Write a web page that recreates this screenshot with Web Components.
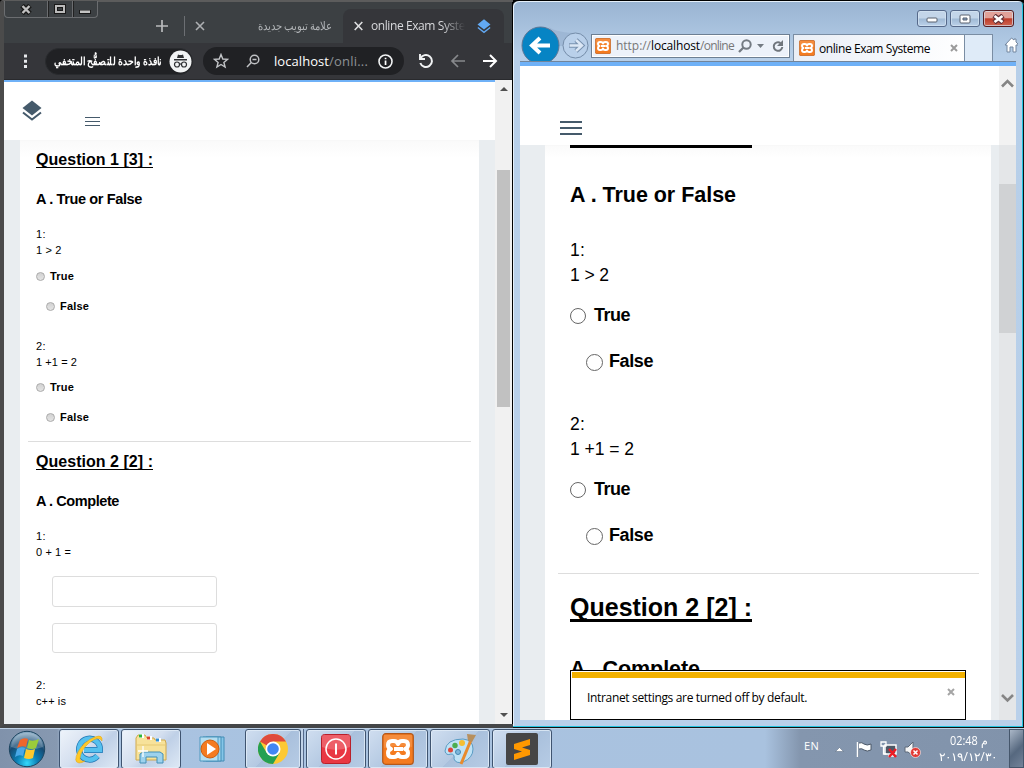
<!DOCTYPE html>
<html lang="en"><head><meta charset="utf-8"><title>Desktop</title>
<style>html,body{margin:0;width:1024px;height:768px;overflow:hidden;background:#000}</style></head>
<body><desktop-screen></desktop-screen>
<script>
const define=(name,html)=>{
  const t=document.createElement('template');
  t.innerHTML='<style>*{box-sizing:border-box}svg{display:block;flex:none}</style>'+html;
  customElements.define(name,class extends HTMLElement{
    constructor(){super();this.attachShadow({mode:'open'}).append(t.content.cloneNode(true));}
  });
};
const XAMPP='<svg width="100%" height="100%" viewBox="0 0 32 32"><rect x=".7" y=".7" width="30.6" height="30.6" rx="3" fill="#f47b20" stroke="#b4581a" stroke-width="1.2"/><path d="M2 2h28v12Q16 11 2 15z" fill="#fff" opacity=".13"/><path d="M10 8h2q3 0 4 3 1-3 4-3h2q4 0 4 4 0 3-3 4 3 1 3 4 0 4-4 4h-2q-3 0-4-3-1 3-4 3h-2q-4 0-4-4 0-3 3-4-3-1-3-4 0-4 4-4zM12 16h9" fill="none" stroke="#fff" stroke-width="4" stroke-linejoin="round"/></svg>';

/* Text run of a given width: letter spacing for Latin, horizontal scale for joined scripts */
customElements.define('fit-text',class extends HTMLElement{
  constructor(){super();this.attachShadow({mode:'open'}).innerHTML='<style>:host{display:inline-block;white-space:pre}:host([dir=rtl]){direction:ltr}:host([dir=rtl]) span{direction:rtl}span{display:inline-block;white-space:pre;transform-origin:0 50%}</style><span><slot></slot></span>';}
  connectedCallback(){
    const s=this.shadowRoot.querySelector('span'),w=+this.getAttribute('w');
    const n=this.textContent.length,m=s.getBoundingClientRect().width;
    if(!w||!m)return;
    this.style.width=w+'px';
    if(this.hasAttribute('scale'))s.style.transform='scaleX('+w/m+')';
    else s.style.letterSpacing=(w-m)/n+'px';
  }
});

define('layers-icon',`<style>:host{display:block}</style><svg width="100%" height="100%" viewBox="0 0 20 22"><path d="M10 .5 19.500 8 10 15.500.5 8z" fill="currentColor"/><path d="M1 12.500 10 19.500 19 12.500" fill="none" stroke="currentColor" stroke-width="2"/></svg>`);

define('menu-lines',`<style>:host{display:flex;flex-direction:column;justify-content:space-between;width:var(--w);height:var(--h)}i{height:var(--t);background:#455a6b}</style><i></i><i></i><i></i>`);

define('exam-line',`<style>:host{display:flex;align-items:center;flex:none;height:var(--h,16px);margin-top:var(--m,0px);padding-left:var(--p,16px);white-space:pre}</style><slot></slot>`);

define('exam-choice',`<style>:host{display:flex;align-items:center;flex:none;height:var(--h,16px);margin-top:var(--m,0px);padding-left:var(--p,16px);font-weight:bold}
i{width:var(--r,9px);height:var(--r,9px);border:1px solid var(--rb,#aaa);border-radius:50%;background:var(--rf,linear-gradient(#d2d2d2,#e4e4e4));margin-right:var(--g,5px);position:relative;top:var(--dy,0)}</style><i></i><slot></slot>`);

define('tab-strip',`<style>:host{display:flex;height:41px;align-items:flex-start;font:12px/16px "Open Sans","Noto Sans",sans-serif;color:#b0b3b6}
.wb{display:flex;width:94px;height:17px;margin:-1px 0 0 0;border:1px solid #6b6d70;border-top:0;border-radius:0 0 4px 4px;outline:0;background:#3c4043}
.wb span{flex:1;display:grid;place-items:center;border-left:1px solid #6b6d70;box-shadow:inset 1px 0 #222}.wb span:first-child{flex:0 0 42px;border:0;box-shadow:none}
.plus{margin:17px 0 0 57px}.sep{width:1px;height:20px;background:#6c6f73;margin:14px 0 0 15px}.x1{margin:19px 0 0 10px}
.ar{margin:16px 0 0 53px;width:74px}
.tab{margin:7px 0 0 11px;width:161px;height:34px;border-radius:8px 8px 0 0;background:#35363a;display:flex;align-items:center;color:#d8d9dc}
.tab fit-text{margin-left:8px;-webkit-mask:linear-gradient(90deg,#000 75%,transparent);mask:linear-gradient(90deg,#000 75%,transparent)}
layers-icon{width:14px;height:15px;color:#62a9f4;margin-left:12px}</style>
<div class="wb"><span><svg width="12" height="11" viewBox="0 0 12 11"><path d="M2 1.500 10 9.500M10 1.500 2 9.500" stroke="#1a1a1a" stroke-width="5"/><path d="M2.500 2 9.500 9M9.500 2 2.500 9" stroke="#c0c0c0" stroke-width="2.400"/></svg></span><span><svg width="12" height="10"><rect x="2" y="2" width="8" height="6" fill="none" stroke="#1a1a1a" stroke-width="4"/><rect x="2" y="2" width="8" height="6" fill="none" stroke="#bbb" stroke-width="2"/></svg></span><span><svg width="12" height="10"><path d="M0 6h12v4H0z" fill="#1a1a1a"/><path d="M1 6.500h10v2.500H1z" fill="#c4c4c4"/></svg></span></div>
<svg class="plus" width="14" height="14"><path d="M7 1v12M1 7h12" stroke="#b9bbbd" stroke-width="1.700"/></svg><i class="sep"></i>
<svg class="x1" width="10" height="10"><path d="M1 1l8 8M9 1 1 9" stroke="#aeb0b3" stroke-width="1.600"/></svg>
<div class="ar"><fit-text w="74" scale dir="rtl">علامة تبويب جديدة</fit-text></div>
<div class="tab"><svg style="margin-left:11px" width="9" height="10"><path d="M.7 1l7.600 8M8.300 1 .7 9" stroke="#dedfe1" stroke-width="1.600"/></svg><fit-text w="94">online Exam Syste</fit-text><layers-icon></layers-icon></div>`);

define('chrome-toolbar',`<style>:host{display:flex;align-items:center;height:37px;background:#35363a;border-bottom:1px solid #292a2d;font:13px/18px "Open Sans","Noto Sans",sans-serif;color:#8d9195}
.pill{display:flex;align-items:center;width:148px;height:27px;margin-left:17px;padding-left:8px;border-radius:14px;background:#202124;border:1px solid #292b2e;color:#fff;font-weight:bold;font-size:11px}
.omni{display:flex;align-items:center;width:201px;height:28px;border-radius:14px;background:#202124;margin-left:10px;padding-left:10px}</style>
<svg width="6" height="16" style="margin-left:18px"><path d="M2 1.500h3v3H2zM2 6.700h3v3H2zM2 12h3v3H2z" fill="#e8eaed"/></svg>
<div class="pill"><fit-text w="108" scale dir="rtl">نافذة واحدة للتصفُّح المتخفي</fit-text><svg style="margin-left:7px" width="23" height="23" viewBox="0 0 23 23"><circle cx="11.500" cy="11.500" r="11" fill="#f1f3f4"/><path d="M8 8 9 4.500Q11.500 5.500 14 4.500L15 8zM5 9h13v1.500H5z" fill="#2e3033"/><g fill="none" stroke="#2e3033" stroke-width="1.200"><circle cx="8" cy="14.500" r="2.500"/><circle cx="15" cy="14.500" r="2.500"/><path d="M10.500 14h2"/></g></svg></div>
<div class="omni"><svg width="16" height="16" viewBox="0 0 16 16"><path d="M8 1.500 9.800 6 14.600 6.300 10.900 9.400 12.100 14 8 11.500 3.900 14 5.100 9.400 1.400 6.300 6.200 6z" fill="none" stroke="#c2c4c7" stroke-width="1.400"/></svg>
<svg style="margin-left:17px" width="14" height="14" viewBox="0 0 14 14"><circle cx="8.500" cy="5.500" r="4.300" fill="none" stroke="#bfc1c4" stroke-width="1.500"/><path d="M5.300 8.500 1 13M6.500 5.500h4" stroke="#bfc1c4" stroke-width="1.500"/></svg>
<fit-text w="55" style="color:#fff;margin-left:14px">localhost</fit-text><fit-text w="39">/onli...</fit-text>
<svg style="margin-left:10px" width="15" height="15"><circle cx="7.500" cy="7.500" r="6.500" fill="none" stroke="#f1f3f4" stroke-width="1.600"/><path d="M6.700 6.500h1.700V11H6.700zM6.700 3.700h1.700v1.600H6.700z" fill="#fff"/></svg></div>
<svg style="margin-left:14px" width="16" height="16"><path d="M2 1v5h5" fill="none" stroke="#f1f3f4" stroke-width="1.900"/><path d="M2.500 5.500A6 6 0 1 1 2.300 10" fill="none" stroke="#f1f3f4" stroke-width="2"/></svg>
<svg style="margin-left:16px" width="16" height="16"><path d="M15 8H2M8 2 2 8l6 6" fill="none" stroke="#87898c" stroke-width="1.700"/></svg>
<svg style="margin-left:16px" width="16" height="16"><path d="M1 8h13M8 2l6 6-6 6" fill="none" stroke="#fff" stroke-width="2"/></svg>`);

define('chrome-page',`<style>:host{display:flex;flex-direction:column;height:644px;width:491px;border-top:2px solid #6fb1f7;background:#e9edf0;font:11px/16px "Liberation Sans",Arial,sans-serif;color:#000;overflow:hidden}
header{height:58px;flex:none;background:#fff;display:flex}header layers-icon{width:20px;height:22px;color:#455a6b;margin:18px 0 0 18px}header menu-lines{--w:15px;--h:9px;--t:1px;margin:35px 0 0 43px}
main{flex:1;margin:0 16px;background:linear-gradient(#f6f6f6,#fafafa 1px,#fff 18px);display:flex;flex-direction:column}
h3,h4{margin:0;font-size:16px}h4{font-size:14.500px}
.u{border-bottom:1px solid #000;line-height:20px;height:18px;margin-bottom:2px}hr{flex:none;border:0;margin:16px 8px 0;height:1px;background:#ddd}
.in{flex:none;width:165px;height:31px;margin:16px 0 0 32px;border:1px solid #ddd;border-radius:3px}</style>
<header><layers-icon></layers-icon><menu-lines></menu-lines></header><main>
<exam-line style="--m:10px;--h:20px"><h3 class="u"><fit-text w="117">Question 1 [3] :</fit-text></h3></exam-line>
<exam-line style="--m:20px;--h:18px"><h4><fit-text w="106">A . True or False</fit-text></h4></exam-line>
<exam-line style="--m:18px"><fit-text w="10">1:</fit-text></exam-line><exam-line><fit-text w="25.500">1 &gt; 2</fit-text></exam-line>
<exam-choice style="--m:10px"><fit-text w="24">True</fit-text></exam-choice><exam-choice style="--m:14px;--p:26px"><fit-text w="29">False</fit-text></exam-choice>
<exam-line style="--m:24px"><fit-text w="10">2:</fit-text></exam-line><exam-line><fit-text w="41">1 +1 = 2</fit-text></exam-line>
<exam-choice style="--m:9px"><fit-text w="24">True</fit-text></exam-choice><exam-choice style="--m:14px;--p:26px"><fit-text w="29">False</fit-text></exam-choice><hr>
<exam-line style="--m:10px;--h:20px"><h3 class="u"><fit-text w="117">Question 2 [2] :</fit-text></h3></exam-line>
<exam-line style="--m:20px;--h:18px"><h4><fit-text w="83">A . Complete</fit-text></h4></exam-line>
<exam-line style="--m:18px"><fit-text w="10">1:</fit-text></exam-line><exam-line><fit-text w="35">0 + 1 =</fit-text></exam-line>
<div class="in"></div><div class="in" style="height:30px"></div>
<exam-line style="--m:24px"><fit-text w="10">2:</fit-text></exam-line><exam-line><fit-text w="30">c++ is</fit-text></exam-line></main>`);

define('chrome-window',`<style>:host{display:flex;flex-direction:column;width:513px;height:728px;border:solid #444648;border-width:2px 0 4px 4px;border-top-color:#5c5c5c;border-left-color:#4b4b4b;background:#3c4043;border-radius:3px 0 0 0;box-shadow:inset -1px 0 #000}
.b{display:flex}.sb{width:17px;height:644px;background:#f1f1f1;display:flex;flex-direction:column;align-items:center}.th{width:13px;height:237px;margin-top:79px;background:#c1c1c1}</style>
<tab-strip></tab-strip><chrome-toolbar style="margin-right:1px"></chrome-toolbar>
<div class="b"><chrome-page></chrome-page><div class="sb"><svg width="8" height="4" style="margin-top:7px"><path d="M0 4 4 0l4 4z" fill="#505050"/></svg><div class="th"></div><svg width="8" height="4" style="margin-top:306px"><path d="M0 0h8L4 4z" fill="#505050"/></svg></div></div>`);

define('ie-bar',`<style>:host{display:flex;flex-direction:column;height:60px;font:12px/16px "Open Sans","Noto Sans",sans-serif;color:#777;padding-top:9px}
.wb{display:flex;gap:3px;height:17px;margin-left:397px;width:97px;flex:none}.wb span{display:grid;place-items:center;width:30px;border:1px solid #56698a;border-radius:3px;box-shadow:inset 0 0 0 1px #d7e5f3aa;background:linear-gradient(#c3d5e9 48%,#9fb9d5 52%,#bcd2ea)}.wb .c{width:31px;background:linear-gradient(#e2a198 45%,#bd3c2a 52%,#cf6754);border-color:#551d22}
.nav{display:flex;height:35px;align-items:flex-end;margin:-1px -2px 0 -1px}
.addr{width:199px;height:24px;border:1px solid #6d7f93;box-shadow:inset 0 0 0 1px #fff;background:#edf2fa;margin:0 0 3px 2px;display:flex;align-items:center;padding-left:3px}
.logo{width:16px;height:16px;flex:none}.tab{width:172px;height:27px;border:1px solid #7a8da3;border-bottom:0;background:linear-gradient(100deg,#e9eef6,#fff);display:flex;align-items:center;padding-left:5px;margin-left:3px;color:#000}.new{width:28px;height:27px;border:1px solid #7a8da3;border-width:1px 1px 0 0;background:#dfebf8}</style>
<div class="wb"><span><svg width="12" height="9"><rect x="1" y="4" width="10" height="4" rx="1" fill="#fff" stroke="#59616e"/></svg></span><span><svg width="12" height="10"><rect x="1" y="1" width="10" height="8" rx="1" fill="#fff" stroke="#59616e"/><path d="M4 4h4v2H4z" fill="#8aa7ca" stroke="#59616e"/></svg></span><span class="c"><svg width="13" height="10"><path d="M2 1.500 11 8.500M11 1.500 2 8.500" stroke="#643238" stroke-width="5"/><path d="M2.500 2 10.500 8M10.500 2 2.500 8" stroke="#fff" stroke-width="2.700"/></svg></span></div>
<div class="nav"><svg width="70" height="35" viewBox="0 0 70 35"><path d="M30 1Q38 7 60 7L52 20H35z" fill="#8fa9ca" opacity=".5"/><circle cx="21.500" cy="19.500" r="18.500" fill="#0684c4" stroke="#5d7796"/><path d="M31 19.500H14M21 12l-8 7.500 8 7.500" fill="none" stroke="#fff" stroke-width="4"/><circle cx="56.500" cy="19.500" r="12.500" fill="#b9d0ea" stroke="#758da9"/><path d="M50 19.500h11M57 14l6 5.500-6 5.500" fill="none" stroke="#7891af" stroke-width="4.500"/><path d="M50.500 19.500h11M57 14l6 5.500-6 5.500" fill="none" stroke="#dbe7f5" stroke-width="2.500"/></svg>
<div class="addr"><div class="logo">${XAMPP}</div><fit-text w="35" style="margin-left:5px">http://</fit-text><fit-text w="49" style="color:#000">localhost</fit-text><fit-text w="34">/online</fit-text>
<svg style="margin-left:4px" width="14" height="14"><circle cx="8.500" cy="5.500" r="4.200" fill="none" stroke="#747b83" stroke-width="2"/><path d="M5.500 8.500 1 13" stroke="#747b83" stroke-width="2.300"/></svg><svg style="margin-left:5px" width="8" height="4"><path d="M0 0h7L3.500 4z" fill="#747b83"/></svg><svg style="margin-left:7px" width="12" height="13"><path d="M8.500 3A4.300 4.300 0 1 0 10.300 7" fill="none" stroke="#70767d" stroke-width="2"/><path d="M11 0v6H5z" fill="#70767d"/></svg></div>
<div class="tab"><div class="logo">${XAMPP}</div><fit-text w="111" style="margin:1px 0 0 4px">online Exam Systeme</fit-text><svg style="margin-left:20px" width="8" height="8"><path d="M1 1l6 6M7 1 1 7" stroke="#9b9b9b" stroke-width="2"/></svg></div><div class="new"></div>
<svg style="margin:0 0 8px 11px" width="14" height="16" viewBox="0 0 14 16"><path d="M7.500 1 1 8h2v7h3v-5h3v5h3V8h2V7l-2-2V2h-2v1z" fill="#fff" stroke="#73869f" stroke-width="1"/></svg></div>`);

define('ie-page',`<style>:host{display:flex;flex-direction:column;position:relative;width:496px;height:659px;border-top:1px solid #73859a;background:#e9edf0;font:17.500px/25px "Liberation Sans",Arial,sans-serif;color:#000;overflow:hidden}
.blue{height:4px;background:#6fb1f7;flex:none}.top{height:79px;flex:none;background:#fff;display:flex}.top menu-lines{--w:22px;--h:14px;--t:2px;margin:55px 0 0 40px}.top svg{background:#f2f2f2;width:17px;margin-left:auto}
.body{display:flex;flex:1;min-height:0}main{width:446px;margin-left:25px;background:linear-gradient(#f6f6f6,#fafafa 1px,#fff 12px);display:flex;flex-direction:column;overflow:hidden}h3,h4{margin:0}h3{font-size:25px;border-bottom:3px solid #000;height:30px;line-height:30px}h4{font-size:21.500px;line-height:22px}.bar{flex:none;height:3px;width:182px;background:#000;margin-left:25px}hr{flex:none;border:0;height:1px;margin:26px 12px 0 13px;background:#ddd}
exam-line{--p:25px;--h:25px}exam-choice{--p:25px;--h:24px;--r:16px;--rb:#666;--rf:#fff;--g:8px;--dy:1px;font-size:18px}.f{--p:41px;--m:22px;--r:17px;--g:6px}
.sb{width:17px;margin-left:8px;background:#e4e6e8;display:flex;flex-direction:column}.th{height:149px;margin-top:39px;background:#d0d2d4}
.note{position:absolute;left:50px;top:608px;width:396px;height:50px;border:1px solid #000;background:#fff;padding:1px 0 0 1px;font:12px/16px "Open Sans","Noto Sans",sans-serif}.note .y{height:6px;background:#f2b100}.row{display:flex;align-items:center;padding:12px 0 0 15px}</style>
<div class="blue"></div><div class="top"><menu-lines></menu-lines><svg viewBox="0 0 17 79"><path d="M3 20.500 8.500 15l5.500 5.500" fill="none" stroke="#858585" stroke-width="2.600"/></svg></div>
<div class="body"><main><div class="bar"></div>
<exam-line style="--m:35px;--h:24px"><h4><fit-text w="166">A . True or False</fit-text></h4></exam-line>
<exam-line style="--m:31px"><fit-text w="15">1:</fit-text></exam-line><exam-line><fit-text w="39">1 &gt; 2</fit-text></exam-line>
<exam-choice style="--m:15px"><fit-text w="36">True</fit-text></exam-choice><exam-choice class="f"><fit-text w="44">False</fit-text></exam-choice>
<exam-line style="--m:39px"><fit-text w="15">2:</fit-text></exam-line><exam-line><fit-text w="64">1 +1 = 2</fit-text></exam-line>
<exam-choice style="--m:15px"><fit-text w="36">True</fit-text></exam-choice><exam-choice class="f"><fit-text w="44">False</fit-text></exam-choice><hr>
<exam-line style="--m:18px;--h:30px"><h3><fit-text w="182">Question 2 [2] :</fit-text></h3></exam-line>
<exam-line style="--m:35px;--h:24px"><h4><fit-text w="130">A . Complete</fit-text></h4></exam-line></main>
<div class="sb"><div class="th"></div><svg width="17" height="12" style="margin-top:359px"><path d="M3 3l5.500 5.500L14 3" fill="none" stroke="#858585" stroke-width="2.600"/></svg></div></div>
<div class="note"><div class="y"></div><div class="row"><fit-text w="220">Intranet settings are turned off by default.</fit-text><svg style="margin:-12px 0 0 140px" width="8" height="8"><path d="M1 1l6 6M7 1 1 7" stroke="#a5a5a5" stroke-width="2"/></svg></div></div>`);

define('ie-window',`<style>:host{display:flex;flex-direction:column;width:511px;height:728px;padding:0 8px 0 7px;border-radius:6px 6px 0 0;background:linear-gradient(#99b4d2,#b7cfe9 55px,#b9d0ea);border:solid #000;border-width:1px 0 0 0;box-shadow:inset -1px -1px #111,inset -2px -2px #23c3df,inset 1px 1px #e5f0fa}
</style><ie-bar></ie-bar><ie-page></ie-page>`);

define('task-button',`<style>:host{display:grid;place-items:center;width:60px;height:40px;border:1px solid #3f5470;border-radius:3px;box-shadow:inset 0 0 0 1px #e1ecf7cc;background:linear-gradient(135deg,#d0def0,#b4c9e2 50%,#a9c0dc 51%,#b7cce5);margin-right:2px}:host([bright]){background:linear-gradient(135deg,#eef3fa,#d4dfef 45%,#bfd0e7 60%,#dee9f5)}:host([plain]){border-color:transparent;box-shadow:none;background:none}</style><slot></slot>`);

define('task-bar',`<style>:host{display:flex;height:40px;background:linear-gradient(90deg,#8092ab 0,#8799b1 57px,#a9c3e1 64px,#a9c2df 765px,#8496ae 800px,#8193ab);border-top:1px solid #bcd0e5;font:12px/16px "Open Sans","Noto Sans",sans-serif;color:#fff}
.orb{margin:1px 13px 0 8px}.stack{width:3px;border-right:1px solid #54698a;background:#c1d3e8;margin-left:-2px;margin-right:2px}
.en{margin:9px 0 0 250px}.tray{display:flex;align-items:center;margin-left:16px;gap:11px;height:40px}.clock{display:flex;flex-direction:column;align-items:center;width:60px;margin:4px 0 0 17px;line-height:16px}.show{width:15px;margin-left:auto;background:linear-gradient(135deg,#aab7c7,#56687f 55%,#738399);border:1px solid #45566b}</style>
<svg class="orb" width="38" height="38" viewBox="0 0 38 38"><defs><radialGradient id="o" cx=".5" cy=".9" r=".85"><stop offset="0" stop-color="#35d9fb"/><stop offset=".35" stop-color="#0b7fb5"/><stop offset=".7" stop-color="#174a72"/><stop offset="1" stop-color="#88a9c2"/></radialGradient></defs><circle cx="19" cy="19" r="17.700" fill="url(#o)" stroke="#1d4560"/><path d="M3 17Q5 3 19 3t16 14Q19 23 3 17z" fill="#fff" opacity=".22"/><path d="M12 10q4-3 8-1l-2 8q-4-2-9 1z" fill="#f0652b"/><path d="M21 10q4 2 10-1l-3 9q-4 2-9 0z" fill="#9bcb3b"/><path d="M9 19q4-3 8-1l-2 8q-4-2-8 1z" fill="#49a8e8"/><path d="M18 19q4 2 9 0l-2 9q-4 2-9 0z" fill="#fdc92c"/></svg>
<task-button bright><svg width="32" height="32" viewBox="0 0 32 32"><path d="M24.500 23A10.500 10.500 0 1 1 27 17H11" fill="none" stroke="#2276b4" stroke-width="6"/><path d="M24.500 23A10.500 10.500 0 1 1 27 17H11" fill="none" stroke="#55c0ee" stroke-width="4.500"/><path d="M29 8Q30 1 22 4 11 8 5 19 0 29 6 30q3 0 6-2-5 1-5-3Q8 17 16 10 26 2 29 8z" fill="#ffc928" stroke="#e0a010" stroke-width=".5"/></svg></task-button>
<task-button bright><svg width="34" height="32" viewBox="0 0 34 32"><path d="M2 27V5l2-3h7l2 3h7l1 2h10l1 3v17z" fill="#f7e29a" stroke="#cfa84c"/><path d="M5 3h5M13 5h5M22 7h5" stroke="#fff" stroke-width="4"/><path d="M5 3h3" stroke="#2bb53b" stroke-width="3"/><path d="M13 5h3" stroke="#d9452b" stroke-width="3"/><path d="M22 7h3" stroke="#318fd5" stroke-width="3"/><path d="M3 12h28" stroke="#e6c973"/><path d="M6 30V21l3-2h17l3 2v9h-6v-6H12v6z" fill="#9dd2ed" stroke="#438fb7"/><path d="M9 13v11M4 18h10" stroke="#fff" stroke-width="1.300"/></svg></task-button>
<task-button plain><svg width="30" height="28" viewBox="0 0 30 28"><path d="M8 2h18v24H8z" fill="#85c6e8" stroke="#438cb5"/><path d="M5 2h18v24H5z" fill="#9fd5ee" stroke="#438cb5"/><path d="M2 2h18v24H2z" fill="#b4def1" stroke="#4e98bf"/><circle cx="12" cy="14" r="9" fill="#f47b20" stroke="#cd5d0d"/><path d="M9 8v12l9-6z" fill="#fff"/></svg></task-button>
<task-button style="width:56px"><svg width="30" height="30" viewBox="0 0 30 30"><circle cx="15" cy="15" r="15" fill="#fcc934"/><path d="M15 15 2 7.500A15 15 0 0 1 28 7.500H15z" fill="#df4b3d"/><path d="M2 7.500A15 15 0 0 0 15 30l6.500-11H15L8.500 18.500z" fill="#24a052"/><circle cx="15" cy="15" r="7.500" fill="#fff"/><circle cx="15" cy="15" r="5.800" fill="#4286f4"/></svg></task-button><i class="stack"></i>
<task-button><svg width="30" height="30"><rect x=".5" y=".5" width="29" height="29" rx="3" fill="#e93743" stroke="#b8202b"/><path d="M1 1h28v12Q15 19 1 13z" fill="#fff" opacity=".2"/><circle cx="15" cy="15" r="10" fill="none" stroke="#fff" stroke-width="1.500"/><path d="M15 9.500v11" stroke="#fff" stroke-width="2"/></svg></task-button>
<task-button><div style="width:32px;height:32px">${XAMPP}</div></task-button>
<task-button><svg width="34" height="32" viewBox="0 0 34 32"><path d="M20 6Q3 6 2 18q1 5 6 3 4 0 3 5 2 5 9 3 10-4 10-13 0-9-10-10z" fill="#bfe2f5" stroke="#5a9cc4"/><circle cx="7.500" cy="17" r="2.500" fill="#e14638"/><circle cx="12" cy="12.500" r="2.700" fill="#4cae4f"/><circle cx="19" cy="10" r="3" fill="#f5be31"/><circle cx="15" cy="19" r="2.500" fill="#7eb7dc" stroke="#4587b1"/><path d="M28 7 18 31" stroke="#e88b2d" stroke-width="3"/><path d="M25 8 24 1l9 1-4 7z" fill="#b78f5d"/></svg></task-button>
<task-button><svg width="32" height="32"><rect width="32" height="32" rx="2" fill="#464646"/><path d="M8 11 24 6v6l-8 2.500 8 2.500v5L8 27v-6l8-2.500L8 16z" fill="#ff9800"/></svg></task-button>
<fit-text class="en" w="15" style="font-size:11px">EN</fit-text>
<div class="tray"><svg width="9" height="5"><path d="M.5 4.500 4.500.5l4 4z" fill="#fff" stroke="#52647b" stroke-width=".5"/></svg>
<svg width="17" height="17" viewBox="0 0 17 17"><path d="M3 1v15M4 2q3-1 5 1 3 2 7 0v6q-4 2-7 0-2-2-5-1" fill="#fff" stroke="#4b5868" stroke-width="1"/><path d="M2.500 1v15" stroke="#fff" stroke-width="1.500"/></svg>
<svg width="17" height="17" style="margin-left:-3px" viewBox="0 0 17 17"><path d="M5 4h11v9H5zM8 15h6" fill="#4d5866" stroke="#fff" stroke-width="1.500"/><path d="M1 1h5v4H1zM3.500 5v8h3" fill="none" stroke="#fff" stroke-width="1.300"/><path d="m9 8 7 8M16 8l-7 8" stroke="#ed1c24" stroke-width="2.500"/></svg>
<svg width="17" height="17" style="margin-left:-4px" viewBox="0 0 17 17"><path d="M1 6h3l5-5v14l-5-4H1z" fill="#f5f5f5" stroke="#5c6979"/><circle cx="11.500" cy="11.500" r="5" fill="#e13a35" stroke="#fff" stroke-width=".6"/><path d="m9.500 9.500 4 4m0-4-4 4" stroke="#fff" stroke-width="1.500"/></svg></div>
<div class="clock"><fit-text w="37" scale>02:48 م</fit-text><fit-text w="58" scale>٢٠١٩/١٢/٣٠</fit-text></div><div class="show"></div>`);

define('desktop-screen',`<style>:host{display:flex;flex-direction:column;width:1024px;height:768px}.windows{display:flex;height:728px}</style><div class="windows"><chrome-window></chrome-window><ie-window></ie-window></div><task-bar></task-bar>`);
</script></body></html>
